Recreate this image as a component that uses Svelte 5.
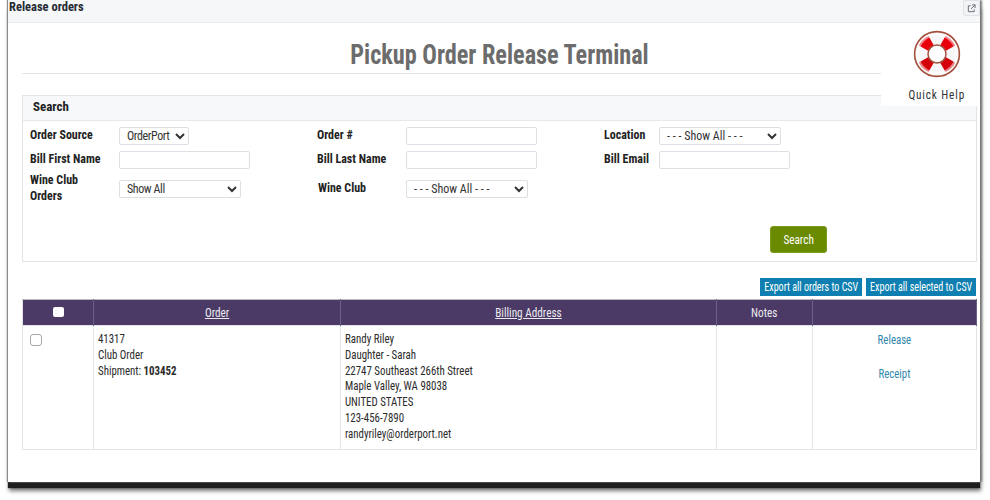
<script>
	const address = [
		'Randy Riley',
		'Daughter - Sarah',
		'22747 Southeast 266th Street',
		'Maple Valley, WA 98038',
		'UNITED STATES',
		'123-456-7890',
		'randyriley@orderport.net'
	];

	const wedge = 'M5.9 15.5A20 20 0 0 1 15.5 5.9L20.9 15.5A9 9 0 0 0 15.5 20.9Z';
</script>

<div class="page">
	<div class="window">
		<header class="titlebar">
			<span class="window-title">Release orders</span>
			<button class="popout" aria-label="Open in new window">
				<svg width="9" height="9" viewBox="0 0 10 10" fill="none" stroke="#5f6670" stroke-width="1">
					<path d="M4 2H1.5v6.5H8V6" />
					<path d="M5.5 1H9v3.5M9 1 4.5 5.5" />
				</svg>
			</button>
		</header>

		<main class="content">
			<h1><span class="cond">Pickup Order Release Terminal</span></h1>

			<div class="quick-help">
				<svg width="48" height="48" viewBox="0 0 48 48">
					<circle cx="24" cy="24" r="22.4" fill="#f7f7f7" stroke="#a5503f" stroke-width="1.6" />
					<path d={wedge} fill="#e8000b" />
					<path d={wedge} fill="#e8000b" transform="rotate(90 24 24)" />
					<path d={wedge} fill="#d3000a" transform="rotate(180 24 24)" />
					<path d={wedge} fill="#d3000a" transform="rotate(270 24 24)" />
					<circle cx="24" cy="24" r="19.5" fill="none" stroke="#fff" stroke-width="3" opacity="0.5" />
					<circle cx="24" cy="24" r="9" fill="#fff" stroke="#a5503f" stroke-width="1.5" />
				</svg>
				<span class="cond">Quick Help</span>
			</div>

			<section class="search">
				<h2>Search</h2>
				<div class="fields">
					<label for="source"><span class="cond-left">Order Source</span></label>
					<select id="source" class="sel-source tight"><option>OrderPort</option></select>
					<label for="order"><span class="cond-left">Order #</span></label>
					<input id="order" type="text" />
					<label for="location"><span class="cond-left">Location</span></label>
					<select id="location" class="sel-wide"><option>- - - Show All - - -</option></select>

					<label for="first"><span class="cond-left">Bill First Name</span></label>
					<input id="first" type="text" />
					<label for="last"><span class="cond-left">Bill Last Name</span></label>
					<input id="last" type="text" />
					<label for="email"><span class="cond-left">Bill Email</span></label>
					<input id="email" type="text" />

					<label for="clubOrders"><span class="cond-left">Wine Club<br />Orders</span></label>
					<select id="clubOrders" class="sel-wide tight"><option>Show All</option></select>
					<label for="club" class="nudge"><span class="cond-left">Wine Club</span></label>
					<select id="club" class="sel-wide"><option>- - - Show All - - -</option></select>
				</div>
				<div class="actions">
					<button class="search-btn"><span class="cond">Search</span></button>
				</div>
			</section>

			<div class="exports">
				<button class="export-orders"><span class="cond">Export all orders to CSV</span></button>
				<button class="export-selected"><span class="cond">Export all selected to CSV</span></button>
			</div>

			<table>
				<thead>
					<tr>
						<th class="c1"><input class="head-check" type="checkbox" /></th>
						<th class="c2"><a class="cond" href="#order">Order</a></th>
						<th class="c3"><a class="cond" href="#billing">Billing Address</a></th>
						<th class="c4"><span class="cond">Notes</span></th>
						<th></th>
					</tr>
				</thead>
				<tbody>
					<tr>
						<td class="check-cell"><input type="checkbox" /></td>
						<td>
							<div class="cond-left">
								41317<br />
								Club Order<br />
								Shipment: <b>103452</b>
							</div>
						</td>
						<td>
							<div class="cond-left">
								{#each address as line}
									{line}<br />
								{/each}
							</div>
						</td>
						<td></td>
						<td class="links">
							<a href="#release"><span class="cond">Release</span></a>
							<a href="#receipt"><span class="cond">Receipt</span></a>
						</td>
					</tr>
				</tbody>
			</table>
		</main>
	</div>
</div>

<style>
	:global(body) {
		background: #fff;
		font-family: 'Roboto', sans-serif;
		font-stretch: 75%;
	}

	/* the reference face is narrower still than Roboto Condensed */
	.cond {
		display: inline-block;
		white-space: nowrap;
		transform: scaleX(0.865);
	}

	.cond-left {
		display: block;
		white-space: nowrap;
		transform: scaleX(0.87);
		transform-origin: left top;
	}

	.page {
		height: 500px;
		overflow: hidden;
	}

	.window {
		position: relative;
		box-sizing: border-box;
		width: 972px;
		height: 482px;
		margin-left: 8px;
		background: #fff;
		box-shadow: -1px 0 1px #8a8a8a, 2px 0 2px #777, 0 6px 1px #1e1e1e, 1px 9px 4px #777;
	}

	.titlebar {
		display: flex;
		justify-content: space-between;
		align-items: flex-start;
		height: 23px;
		box-sizing: border-box;
		background: #f6f7f9;
		border-bottom: 1px solid #e9ebee;
	}

	.window-title {
		margin: 0 0 0 1px;
		font-size: 12.5px;
		line-height: 14px;
		font-weight: 700;
		color: #262b33;
	}

	.popout {
		display: flex;
		align-items: center;
		justify-content: center;
		width: 17px;
		height: 16px;
		padding: 0;
		margin: 0;
		background: #f2f3f5;
		border: 1px solid #dfe2e6;
		border-radius: 2px;
	}

	.content {
		padding: 0 3px 0 14px;
	}

	h1 {
		margin: 0 0 21px;
		height: 50px;
		line-height: 64px;
		border-bottom: 1px solid #e2e4e6;
		text-align: center;
		font-size: 28px;
		font-weight: 700;
		color: #6c6c6c;
	}

	.quick-help {
		position: absolute;
		top: 23px;
		right: 3px;
		width: 96px;
		height: 83px;
		background: #fff;
		display: flex;
		flex-direction: column;
		align-items: center;
		color: #333;
		font-size: 13px;
		letter-spacing: 1px;
	}

	.quick-help svg {
		margin: 7px 0 9px 15px;
	}

	.quick-help span {
		margin-left: 15px;
	}

	.search {
		height: 167px;
		box-sizing: border-box;
		border: 1px solid #e2e4e6;
	}

	h2 {
		margin: 0;
		height: 24px;
		padding-left: 10px;
		line-height: 22px;
		font-size: 13px;
		font-weight: 700;
		color: #222;
		background: #f7f8fa;
		border-bottom: 1px solid #e6e8ea;
	}

	.fields {
		display: grid;
		grid-template-columns: 89px 198px 89px 198px 55px 1fr;
		grid-template-rows: 18px 18px 28px;
		align-items: center;
		justify-items: start;
		row-gap: 6px;
		height: 88px;
		box-sizing: border-box;
		padding: 6px 7px 0;
	}

	label {
		margin-top: -2px;
		font-size: 13px;
		line-height: 16px;
		font-weight: 700;
		color: #222;
	}

	label .cond-left {
		transform: scaleX(0.92);
	}

	.nudge {
		margin-left: 1px;
	}

	input[type='text'],
	select {
		box-sizing: border-box;
		height: 18px;
		margin: 0;
		font: inherit;
		font-size: 12px;
		color: #333;
		background: #fff;
		border: 1px solid #dcdfe3;
		border-radius: 2px;
		padding: 0 0 0 3px;
	}

	input[type='text'] {
		width: 131px;
	}

	.tight {
		letter-spacing: -0.4px;
	}

	.sel-source {
		width: 70px;
	}

	.sel-wide {
		width: 122px;
	}

	.actions {
		display: flex;
		justify-content: flex-end;
		padding: 17px 149px 0 0;
	}

	.search-btn {
		width: 57px;
		height: 27px;
		padding: 0;
		font: inherit;
		font-size: 13px;
		color: #fff;
		background: #6a8a00;
		border: 1px solid #7c9a1e;
		border-radius: 3px;
	}

	.exports {
		display: flex;
		justify-content: flex-end;
		gap: 4px;
		margin: 16px 1px 3px 0;
	}

	.exports button {
		height: 18px;
		padding: 0;
		font: inherit;
		font-size: 12px;
		color: #fff;
		background: #0e7fb0;
		border: none;
		overflow: hidden;
	}

	.exports .cond {
		transform: scaleX(0.835);
		margin: 0 -20px;
	}

	.export-orders {
		width: 102px;
	}

	.export-selected {
		width: 110px;
	}

	table {
		width: 955px;
		table-layout: fixed;
		border-collapse: collapse;
		font-size: 12.5px;
		color: #2b2b2b;
	}

	th {
		height: 25px;
		padding: 0;
		background: #4b3a66;
		color: #eceaf0;
		font-size: 13px;
		font-weight: 400;
		border: 1px solid #6d5f84;
		border-top-color: #b9b9b9;
		border-bottom: none;
	}

	th:first-child,
	td:first-child {
		border-left-color: #e4e4e4;
	}

	th a {
		color: #eceaf0;
	}

	.c1 {
		width: 70px;
	}

	.c2 {
		width: 246px;
	}

	.c3 {
		width: 375px;
	}

	.c4 {
		width: 95px;
	}

	.head-check {
		appearance: none;
		width: 11px;
		height: 10px;
		margin: 0 0 3px;
		background: #fff;
		border-radius: 2px;
		vertical-align: middle;
	}

	td {
		height: 124px;
		box-sizing: border-box;
		padding: 5px 4px 0;
		vertical-align: top;
		line-height: 15.8px;
		border: 1px solid #e4e4e4;
	}

	.check-cell input {
		appearance: none;
		display: block;
		width: 12px;
		height: 12px;
		margin: 3px 0 0 3px;
		background: #fff;
		border: 1px solid #a8a8a8;
		border-radius: 3px;
	}

	.links {
		padding-top: 6px;
		padding-right: 5px;
		text-align: center;
	}

	.links a {
		display: block;
		margin: 0 0 18px;
		color: #2f86ad;
		text-decoration: none;
	}
</style>
